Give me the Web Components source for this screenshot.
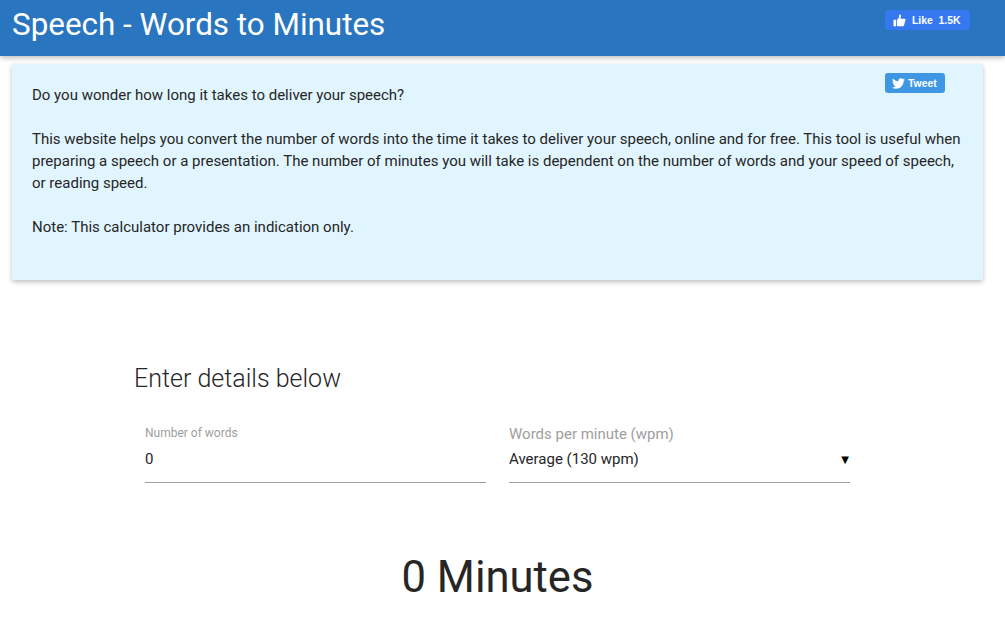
<!DOCTYPE html>
<html lang="en">
    <head>
        <meta charset="UTF-8" />
        <title>Speech - Words to Minutes</title>
        <style>
            html, body { margin: 0; background: #fff; }
            body { font-family: Roboto, "Liberation Sans", sans-serif; color: #262626; height: 630px; overflow: hidden; }
        </style>
    </head>
    <body>
        <app-header title="Speech - Words to Minutes"></app-header>
        <info-card>
            <p>Do you wonder how long it takes to deliver your speech?</p>
            <p>This website helps you convert the number of words into the time it takes to deliver your speech, online and for free. This tool is useful when preparing a speech or a presentation. The number of minutes you will take is dependent on the number of words and your speed of speech, or reading speed.</p>
            <p>Note: This calculator provides an indication only.</p>
        </info-card>
        <calc-form></calc-form>

        <script>
            const thumb = `<svg width="13" height="13" viewBox="0 0 14 14"><path fill="#fff" d="M0.5 6.2h2.8v7H0.5zM4.2 6.4 6.6 3.6V0.8c0-.5 1.8-.6 2 1.2.1 1-.3 2.3-.6 3h4.4c1 0 1.3 1 1 1.6l-1.500 5.600c-.2.6-.6 1-1.300 1H5.200c-.6 0-1-.4-1-1z"/></svg>`
            const bird = `<svg width="13" height="11" viewBox="0 0 24 20"><path fill="#fff" d="M24 2.400c-.9.4-1.800.7-2.800.8 1-.6 1.800-1.600 2.200-2.700-1 .6-2 1-3.100 1.200C19.300.7 18 .1 16.600.1c-3.200 0-5.500 3-4.800 6C7.700 5.900 4.100 3.900 1.700.9.400 3.100 1 6 3.200 7.500c-.8 0-1.600-.2-2.200-.6 0 2.300 1.600 4.400 4 4.900-.7.200-1.500.2-2.200.1.600 2 2.500 3.400 4.600 3.400-2.100 1.600-4.700 2.300-7.400 2 2.200 1.400 4.800 2.200 7.500 2.200 9.100 0 14.300-7.700 14-14.600 1-.7 1.800-1.600 2.500-2.500z"/></svg>`

            class AppHeader extends HTMLElement {
                constructor() {
                    super()
                    this.attachShadow({ mode: 'open' })
                    this.shadowRoot.innerHTML = `
<style>
:host {
    display: flex;
    justify-content: space-between;
    height: 56px;
    padding: 0 35px 0 12px;
    background: #2a75bf;
    box-shadow: 0 2px 5px rgba(0,0,0,.26);
    position: relative;
}
h1 {
    margin: 0;
    font: 400 31.4px/50px Roboto, sans-serif;
    color: #fff;
}
social-button { margin-top: 10px; }
</style>
<h1>${this.getAttribute('title')}</h1>
<social-button color="#3578f0" width="85" pad="8">${thumb}<span>Like&nbsp; 1.5K</span></social-button>
`
                }
            }

            class SocialButton extends HTMLElement {
                constructor() {
                    super()
                    this.attachShadow({ mode: 'open' })
                    this.shadowRoot.innerHTML = `
<style>
:host {
    display: inline-flex;
    align-items: center;
    gap: ${this.getAttribute('gap') || 6}px;
    box-sizing: border-box;
    height: 20px;
    width: ${this.getAttribute('width')}px;
    padding-left: ${this.getAttribute('pad')}px;
    border-radius: 3px;
    background: ${this.getAttribute('color')};
    color: #fff;
    font: 700 10.4px "Liberation Sans", Arial, sans-serif;
}
</style>
<slot></slot>
`
                }
            }

            class InfoCard extends HTMLElement {
                constructor() {
                    super()
                    this.attachShadow({ mode: 'open' })
                    this.shadowRoot.innerHTML = `
<style>
:host {
    display: block;
    position: relative;
    box-sizing: border-box;
    height: 216px;
    margin: 8px 22px 0 12px;
    padding: 20px 20px 0;
    border-radius: 2px;
    background: #e1f5fe;
    box-shadow: 0 2px 5px rgba(0,0,0,.26);
    font-size: 15px;
    line-height: 22px;
}
::slotted(p) {
    margin: 0 0 22px;
}
social-button {
    position: absolute;
    top: 9px;
    right: 38px;
}
</style>
<social-button color="#3f97e3" width="60" pad="7" gap="3">${bird}<span>Tweet</span></social-button>
<slot></slot>
`
                }
            }

            class TextField extends HTMLElement {
                constructor() {
                    super()
                    this.attachShadow({ mode: 'open' })
                    const small = this.hasAttribute('small')
                    this.shadowRoot.innerHTML = `
<style>
:host {
    display: block;
    height: 57px;
    border-bottom: 1px solid #9e9e9e;
    box-sizing: content-box;
}
label {
    display: block;
    height: 24px;
    line-height: ${small ? 17 : 19}px;
    font-size: ${small ? 12 : 15}px;
    color: #9e9e9e;
}
.value {
    display: flex;
    justify-content: space-between;
    align-items: center;
    height: 20px;
    font-size: 15px;
    color: #262626;
}
</style>
<label>${this.getAttribute('label')}</label>
<div class="value"><slot></slot></div>
`
                }
            }

            class CalcForm extends HTMLElement {
                constructor() {
                    super()
                    this.attachShadow({ mode: 'open' })
                    this.shadowRoot.innerHTML = `
<style>
:host {
    display: block;
    width: 727px;
    margin: 0 0 0 134px;
    padding-top: 84px;
}
h2 {
    margin: 0;
    font: 300 25px/30px Roboto, sans-serif;
    color: #262626;
}
.row {
    display: grid;
    grid-template-columns: 341px 341px;
    gap: 23px;
    margin: 0 11px;
    padding-top: 31px;
}
.result {
    margin: 68px 0 0;
    width: 727px;
    text-align: center;
    font: 400 43.6px/54px Roboto, sans-serif;
    color: #262626;
}
.arrow { font: 10px "DejaVu Sans", sans-serif; color: #000; margin-right: 1px; }
</style>
<h2>Enter details below</h2>
<div class="row">
    <text-field label="Number of words" small><span>0</span></text-field>
    <text-field label="Words per minute (wpm)"><span>Average (130 wpm)</span><span class="arrow">▼</span></text-field>
</div>
<div class="result">0 Minutes</div>
`
                }
            }

            customElements.define('social-button', SocialButton)
            customElements.define('app-header', AppHeader)
            customElements.define('info-card', InfoCard)
            customElements.define('text-field', TextField)
            customElements.define('calc-form', CalcForm)
        </script>
    </body>
</html>
